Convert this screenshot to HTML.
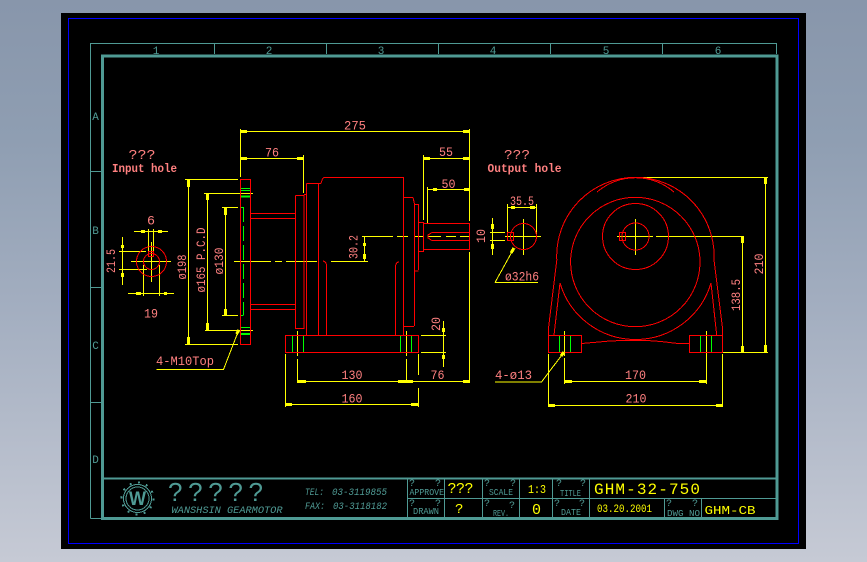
<!DOCTYPE html>
<html><head><meta charset="utf-8"><style>
html,body{margin:0;padding:0;width:867px;height:562px;overflow:hidden;background:linear-gradient(180deg,#8896ab 0%,#8f9eb2 25%,#a3aec0 55%,#c6cad5 100%)}
svg{position:absolute;left:0;top:0;shape-rendering:crispEdges}
.y{stroke:#ff0;fill:none;stroke-width:1}
.r{stroke:#f00;fill:none;stroke-width:1}
.g{stroke:#0f0;fill:none;stroke-width:1}
.t{stroke:#4f9a94;fill:none;stroke-width:1}
.a{stroke:#ff0;fill:none;stroke-width:3}
text{font-family:"Liberation Mono",monospace}
.p{fill:#ff8080;font-size:13px}
.l{fill:#4f9a94;font-size:11px}
.s{fill:#4f9a94;font-size:9px}
.q{fill:#4f9a94;font-size:10px}
.v{fill:#ff0;font-size:13px}
</style></head><body>
<svg width="867" height="562" viewBox="0 0 867 562">
<rect x="61" y="13" width="745" height="536" fill="#000"/>
<rect x="68.5" y="18.5" width="730" height="525" fill="none" stroke="#00f" stroke-width="1"/>
<!-- frame -->
<path class="t" d="M90.5 518.5V43.5H776.5V54M214.5 43.5V54M326.5 43.5V54M438.5 43.5V54M550.5 43.5V54M662.5 43.5V54M90.5 171.5H101M90.5 287.500H101M90.5 402.500H101M90.5 518.500H101"/>
<rect x="102.5" y="56" width="674.5" height="462.5" fill="none" stroke="#4f9a94" stroke-width="3"/>
<path class="t" d="M103 478.5H776" style="stroke-width:2"/>
<path class="t" d="M407.5 478V517M444.5 478V517M482.5 478V517M519.5 478V517M552.5 478V517M589.5 478V517M664.5 498V517M701.5 498V517M407 498.5H776"/>
<g class="l" text-anchor="middle">
<text x="156" y="54">1</text><text x="269" y="54">2</text><text x="381" y="54">3</text><text x="493" y="54">4</text><text x="606" y="54">5</text><text x="718" y="54">6</text>
<text x="95.5" y="120">A</text><text x="95.5" y="234">B</text><text x="95.5" y="349">C</text><text x="95.5" y="463">D</text>
</g>
<!-- dims main -->
<path class="y" d="M240.5 129V177M469.5 129V221M469.5 252V383M240.5 131.5H469.5M240.5 158.5H303.5M303.5 155V193M423.5 155V220M423.5 158.5H469.5M427.5 187V224M427.5 189.5H469.5"/>
<path class="y" d="M234 261.5H271M275 261.5H282M286 261.5H317M331 261.5H368M362 236.5H380M380 236.5H393M397 236.5H408M414 236.5H423M428 236.5H441M446 236.5H456M460 236.5H470M364.5 236.5V261.5"/>
<path class="y" d="M185 179.5H238M185 344.5H238M188.5 179.5V344.5M204 193.5H253M205 330.5H253M207.5 193.5V330.5M222 207.5H238M222 315.5H238M225.5 207.5V315.5"/>
<path class="y" d="M297.5 331V356M297.5 359V383M406.5 331V356M406.5 359V383M285.5 354V407M418.5 354V375M418.5 388V407M297.5 381.5H469.5M285.5 404.5H418.5M443.5 321V367M421 335.5H446M421 352.5H446"/>
<path class="y" d="M492.5 218V255M490 232.5H505M490 240.5H505M505 236.5H541M523.5 219V255M507.5 204V232M536.5 204V236M507.5 207.5H536.5"/>
<path class="y" d="M617 236.5H653M635.5 219V255M656 236.5H744M742.5 236.5V352M639 177.5H768M722 352.5H768M765.5 177.5V352"/>
<path class="y" d="M564.5 331V356M564.5 358V384M706.5 331V384M564.5 381.5H706.5M548.5 354V407M722.5 354V407M548.5 405.5H722.5"/>
<path class="y" d="M134 231.5H168M148.5 229V251M153.5 229V251M122.5 237V285M119 251.5H146M119 269.5H147M128 293.5H174M143.5 265V296M159.5 265V296M131 261.5H171M151.5 242V282"/>
<!-- arrows -->
<path class="a" d="M241 131.5H247M463 131.5H469M241 158.5H247M297 158.5H303M424 158.5H430M463 158.5H469M433 189.5H437M464 189.5H469M188.5 180V187M188.5 337V344M207.5 194V200M207.5 323V330M225.5 208V215M225.5 309V315"/>
<path class="a" d="M298 381.5H306M398 381.5H406M407 381.5H413M463 381.5H469M286 404.5H292M411 404.5H418M443.5 328V332M443.5 355V359M492.5 224V229M492.5 244V249M511 207.5H515M530 207.5H535"/>
<path class="a" d="M565 381.5H572M699 381.5H706M549 405.5H555M716 405.5H722M742.5 237V243M742.5 346V352M765.5 178V184M765.5 345V352"/>
<path class="a" d="M141 231.5H145M158 231.5H162M122.5 245V248M122.5 273V277M136 293.5H141M164 293.5H167M364.5 243V246M364.5 254V259"/>
<!-- green -->
<path class="g" d="M240 188.5H250M240 190.5H250M240 327.5H250M292.5 335V352M303.5 335V352M400.5 335V352M411.5 335V352M559.5 335V352M570.5 335V352M700.5 335V352M711.5 335V352M240 207.5H243.5M240 315.5H243.5"/>
<path d="M240 196.5H250M240 334H250" stroke="#0f0" stroke-width="2"/>
<path class="g" d="M243.5 207V222M243.5 226V241M243.5 245V260M243.5 264V279M243.5 283V298M243.5 302V315"/>
<!-- red -->
<path class="r" d="M240.5 179.5H250.5V344.5H240.5ZM250.5 213.5H295M250.5 218.5H295M250.5 304.5H295M250.5 309.5H295M295.5 195.5H304M295.5 195.5V328.5H304V195M304 194.5H306.5M306.5 183.5V335M318.5 183.5V335M306.5 183.5H321"/>
<path class="r" d="M323.5 177.5H403.5V335M395.5 335V266"/>
<path class="r" d="M326.5 335V265M403.5 197.5H413M414.5 204V326M404 326.5H414M414.5 204.5H418.5V270M414.5 271H418.5M418.5 222.5H423.5V251.5H418.5ZM423.5 223.5H469.5V249.5H423.5ZM432 232.5H469.5M432 240.5H469.5"/>
<rect x="285.5" y="335.5" width="133" height="17" class="r"/>
<rect x="548.5" y="335.5" width="33" height="17" class="r"/>
<rect x="689.5" y="335.5" width="33" height="17" class="r"/>
<rect x="148.5" y="251.5" width="5" height="5" class="r"/>
<rect x="507.5" y="232.5" width="6" height="8" class="r"/>
<rect x="619.5" y="232.5" width="6" height="8" class="r"/>
<path class="r" d="M321 183.5L322 180L323.5 177.5M413 197.5L414.5 204M326.5 265Q326 261.500 323 261M395.500 266Q396 262 399 262M432 232.500L428 235V238L432 240.500"/>
<circle class="r" cx="151.500" cy="261.500" r="15"/>
<circle class="r" cx="151.500" cy="261.500" r="8"/>
<circle class="r" cx="523.500" cy="236.500" r="13"/>
<circle class="r" cx="635.500" cy="236.500" r="13.500"/>
<circle class="r" cx="635.500" cy="236.500" r="33"/>
<circle class="r" cx="635.300" cy="262" r="64.700"/>
<path class="r" d="M597 192A59 59 0 0 1 674 192"/>
<path class="r" d="M556.800 260A78.700 78.700 0 1 1 714 260M556.800 260L548.500 328V335M714 260L722.500 328V335M560 283L554 335M711 283L716.700 335M560 283A78.700 78.700 0 0 0 711 283"/>
<path class="r" d="M581.500 343.500L593 342.500L610 341L627 340.300H644L661 341.500L678 343.500H689.500"/>
<!-- leaders -->
<path class="y" d="M156.500 369.500H223.500L238 332M495 382H541.500L563 353.500M495 282.500H538"/>
<path class="y" d="M495 282.500L513 250"/>
<path class="a" d="M236.500 334L239 330M561 356L564 352M511 253L514 248"/>
<!-- pink text -->
<g class="p" text-anchor="middle">
<text x="142" y="159" textLength="27" lengthAdjust="spacingAndGlyphs" font-size="14">???</text>
<text x="144.500" y="172" textLength="65" lengthAdjust="spacingAndGlyphs" font-weight="bold" font-size="12">Input hole</text>
<text x="517" y="159" textLength="26" lengthAdjust="spacingAndGlyphs" font-size="14">???</text>
<text x="524.500" y="172" textLength="74" lengthAdjust="spacingAndGlyphs" font-size="12" font-weight="bold">Output hole</text>
<text x="355" y="129.500" textLength="22" lengthAdjust="spacingAndGlyphs">275</text>
<text x="272" y="156.500" textLength="14" lengthAdjust="spacingAndGlyphs">76</text>
<text x="446" y="156" textLength="14" lengthAdjust="spacingAndGlyphs">55</text>
<text x="448.500" y="188" textLength="14" lengthAdjust="spacingAndGlyphs">50</text>
<text x="522" y="205" textLength="24" lengthAdjust="spacingAndGlyphs">35.5</text>
<text x="151" y="224.500" textLength="8" lengthAdjust="spacingAndGlyphs">6</text>
<text x="151" y="317.500" textLength="14" lengthAdjust="spacingAndGlyphs">19</text>
<text x="352" y="379" textLength="21" lengthAdjust="spacingAndGlyphs">130</text>
<text x="437.500" y="379" textLength="14" lengthAdjust="spacingAndGlyphs">76</text>
<text x="352" y="402.500" textLength="21" lengthAdjust="spacingAndGlyphs">160</text>
<text x="635.500" y="379" textLength="21" lengthAdjust="spacingAndGlyphs">170</text>
<text x="636" y="402.500" textLength="21" lengthAdjust="spacingAndGlyphs">210</text>
<text x="185" y="365" textLength="58" lengthAdjust="spacingAndGlyphs">4-M10Top</text>
<text x="513.500" y="379" textLength="37" lengthAdjust="spacingAndGlyphs">4-ø13</text>
<text x="522" y="280.500" textLength="34" lengthAdjust="spacingAndGlyphs">ø32h6</text>
<text transform="translate(115,261) rotate(-90)" textLength="24" lengthAdjust="spacingAndGlyphs">21.5</text>
<text transform="translate(186,267) rotate(-90)" textLength="25" lengthAdjust="spacingAndGlyphs">ø198</text>
<text transform="translate(205,260) rotate(-90)" textLength="65" lengthAdjust="spacingAndGlyphs">ø165 P.C.D</text>
<text transform="translate(223,261) rotate(-90)" textLength="27" lengthAdjust="spacingAndGlyphs">ø130</text>
<text transform="translate(357.500,247) rotate(-90)" textLength="24" lengthAdjust="spacingAndGlyphs">30.2</text>
<text transform="translate(485,236) rotate(-90)" textLength="14" lengthAdjust="spacingAndGlyphs">10</text>
<text transform="translate(440,324) rotate(-90)" textLength="14" lengthAdjust="spacingAndGlyphs">20</text>
<text transform="translate(740,295) rotate(-90)" textLength="32" lengthAdjust="spacingAndGlyphs">138.5</text>
<text transform="translate(763,264) rotate(-90)" textLength="21" lengthAdjust="spacingAndGlyphs">210</text>
</g>
<!-- logo -->
<circle cx="137.500" cy="498.500" r="14" fill="none" stroke="#4f9a94" stroke-width="1"/>
<circle cx="137.500" cy="498.500" r="11.500" fill="none" stroke="#4f9a94" stroke-width="1"/>
<circle cx="137.500" cy="498.500" r="16" fill="none" stroke="#4f9a94" stroke-width="2" stroke-dasharray="2 6.400"/>
<text x="137.500" y="505" text-anchor="middle" style="fill:#4f9a94;font-size:19px;font-weight:bold;font-family:'Liberation Sans',sans-serif" textLength="17" lengthAdjust="spacingAndGlyphs">W</text>
<!-- title left -->
<text x="168" y="501" style="font-size:26px;fill:#4f9a94;font-family:'Liberation Sans',sans-serif" textLength="95" lengthAdjust="spacing">?????</text>
<text x="171.500" y="513" style="font-size:10px;font-style:italic;fill:#4f9a94" textLength="111" lengthAdjust="spacingAndGlyphs">WANSHSIN GEARMOTOR</text>
<text x="305" y="495" style="font-size:10px;font-style:italic;fill:#4f9a94" textLength="19" lengthAdjust="spacingAndGlyphs">TEL:</text>
<text x="332" y="495" style="font-size:10px;font-style:italic;fill:#4f9a94" textLength="55" lengthAdjust="spacingAndGlyphs">03-3119855</text>
<text x="305" y="509" style="font-size:10px;font-style:italic;fill:#4f9a94" textLength="20" lengthAdjust="spacingAndGlyphs">FAX:</text>
<text x="333" y="509" style="font-size:10px;font-style:italic;fill:#4f9a94" textLength="54" lengthAdjust="spacingAndGlyphs">03-3118182</text>
<!-- title cells -->
<g class="q">
<text x="409" y="486">?</text><text x="435" y="486">?</text><text x="409" y="506">?</text><text x="435" y="506">?</text>
<text x="484" y="486">?</text><text x="510" y="486">?</text><text x="484" y="506">?</text><text x="509" y="508">?</text>
<text x="556" y="486">?</text><text x="580" y="486">?</text><text x="554" y="506">?</text><text x="579" y="506">?</text>
<text x="666" y="506">?</text><text x="692" y="506">?</text>
</g>
<g class="s">
<text x="409.500" y="495" textLength="34.500" lengthAdjust="spacingAndGlyphs">APPROVE</text>
<text x="413" y="514" textLength="26" lengthAdjust="spacingAndGlyphs">DRAWN</text>
<text x="489" y="495" textLength="24" lengthAdjust="spacingAndGlyphs">SCALE</text>
<text x="493" y="516" textLength="16" lengthAdjust="spacingAndGlyphs">REV.</text>
<text x="560" y="496" textLength="21" lengthAdjust="spacingAndGlyphs">TITLE</text>
<text x="561" y="515" textLength="20" lengthAdjust="spacingAndGlyphs">DATE</text>
<text x="667" y="516" textLength="33" lengthAdjust="spacingAndGlyphs">DWG NO</text>
</g>
<g class="v">
<text x="447.500" y="493" textLength="26" lengthAdjust="spacing" style="font-size:15px">???</text>
<text x="455" y="513" style="font-size:14px">?</text>
<text x="528" y="493" textLength="18" lengthAdjust="spacingAndGlyphs" style="font-size:12px">1:3</text>
<text x="532" y="514" style="font-size:15px">0</text>
<text x="594" y="494" textLength="106" lengthAdjust="spacing" style="font-size:16px">GHM-32-750</text>
<text x="597" y="512" textLength="55" lengthAdjust="spacingAndGlyphs" style="font-size:11px">03.20.2001</text>
<text x="704.500" y="514" textLength="51" lengthAdjust="spacingAndGlyphs" style="font-size:12px">GHM-CB</text>
</g>
</svg>
</body></html>
